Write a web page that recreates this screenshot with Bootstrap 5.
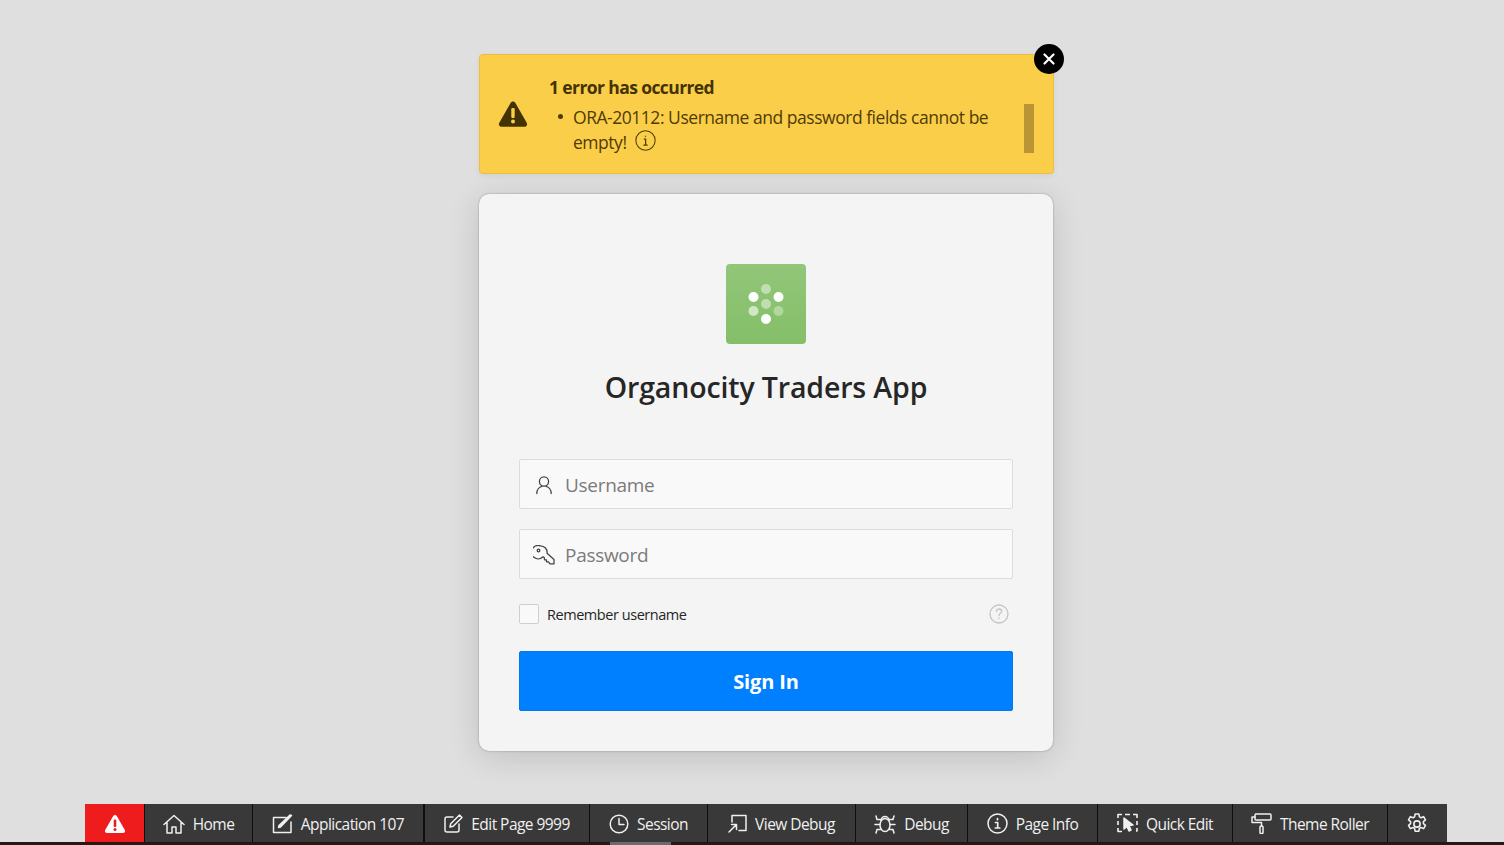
<!DOCTYPE html>
<html lang="en">
<head>
    <meta charset="UTF-8">
    <title>Organocity Traders App - Sign In</title>
    <meta name="viewport" content="width=device-width, initial-scale=1.0">
    <link href="https://cdn.jsdelivr.net/npm/bootstrap@5.3.0/dist/css/bootstrap.min.css" rel="stylesheet">
    <style>
        html, body { height: 100%; }
        body { background: #dfdfdf; font-family: "Open Sans", "Noto Sans", sans-serif; color: #262626; overflow: hidden; }
        .page-wrap { height: 845px; }
        .login-col { width: 575px; margin: 54px 0 0 479px; }

        .err-box { height: 120px; background: #fbce4a; border: 1px solid #eebd3c; border-radius: 4px; color: #443302; box-shadow: 0 2px 6px rgba(0,0,0,.06); padding-left: 18px; }
        .err-title { font-size: 17.5px; font-weight: 700; line-height: 24px; letter-spacing: -.6px; margin-bottom: 6px; margin-top: -1px; padding-left: 1px; }
        .err-list { font-size: 17.5px; line-height: 25px; letter-spacing: -.47px; padding-left: 25px; margin: 0; color: #4f3c05; list-style: none; }
        .err-list li { position: relative; }
        .err-list li::before { content: ""; position: absolute; left: -15px; top: 9px; width: 5px; height: 5px; border-radius: 50%; background: #4f3c05; }
        .err-text { width: 445px; margin-left: 20px; padding-top: 21px; }
        .err-scroll { width: 10px; height: 49px; background: #b99535; position: absolute; right: 19px; top: 49px; }
        .err-close { position: absolute; right: -11px; top: -11px; width: 30px; height: 30px; border-radius: 50%; background: #000; border: 0; padding: 0; }

        .login-card { margin-top: 20px; height: 557px; width: 574px; background: #f4f4f4; border-radius: 10px; box-shadow: 0 0 2px rgba(0,0,0,.35), 0 6px 32px rgba(0,0,0,.14); padding: 70px 40px 0; }
        .app-logo { width: 80px; height: 80px; border-radius: 4px; background: linear-gradient(#92c679, #84bf68); }
        .app-name { font-size: 28.5px; font-weight: 600; line-height: 36px; margin: 25px 0 54px; letter-spacing: -.14px; color: #262626; }
        .field-box { height: 50px; background: #f9f9f9; border: 1px solid #dcdcdc; border-radius: 2px; margin-bottom: 20px; }
        .field-icon { width: 45px; flex: none; padding: 2px 0 0 3px; }
        .field-box .form-control { background: transparent; border: 0; padding: 2px 0 0; font-size: 19px; letter-spacing: -.3px; box-shadow: none; }
        .field-box .form-control::placeholder { color: #7b7b7b; }
        .remember-row { height: 20px; margin: 25px 0 27px; }
        .remember-row .form-check-input { width: 20px; height: 20px; margin: 0; background-color: #f9f9f9; border-color: #cfcfcf; border-radius: 2px; }
        .remember-row label { font-size: 14.5px; margin-left: 8px; padding-top: 2px; letter-spacing: -.45px; }
        .signin-btn { height: 60px; width: 100%; background: #0080ff; border: 1px solid #0076f0; border-radius: 2px; color: #fff; font-size: 20px; font-weight: 700; letter-spacing: -.15px; padding-top: 8px; }
        .signin-btn:hover { background: #0080ff; color: #fff; }

        .dev-bar { margin: 0 57px 0 85px; height: 38px; background: #393939; }
        .dev-item { height: 38px; padding-top: 3px; color: #f0f0f0; font-size: 15.5px; letter-spacing: -.55px; border-right: 1px solid #0f0f0f; text-decoration: none; white-space: nowrap; gap: 8px; justify-content: center; position: relative; }
        .dev-item:hover { color: #fff; }
        .dev-item.alert-item { background: #ee1c1c; }
        .dev-item:last-child { border-right: 0; }
        .dev-item svg { flex: none; margin-top: -2px; fill: none; stroke: #f0f0f0; stroke-width: 1.5; stroke-linecap: round; stroke-linejoin: round; }
        .w-alert { width: 60px; }
        .w-home { width: 108px; }
        .w-app { width: 172px; border-right-width: 2px !important; }
        .w-edit { width: 165px; }
        .w-session { width: 118px; }
        .w-view { width: 148px; }
        .w-debug { width: 112px; }
        .w-info { width: 130px; }
        .w-quick { width: 135px; }
        .w-theme { width: 155px; }
        .w-gear { width: 59px; padding-right: 2px; }
        .bottom-strip { height: 3px; background: #2a1612; position: relative; }
        .strip-tab { position: absolute; left: 610px; top: 0; width: 61px; height: 3px; background: #6b6b6b; }
    </style>
</head>
<body>

<div class="page-wrap d-flex flex-column">
    <div class="login-col">
        <!-- Error message -->
        <div class="err-box d-flex position-relative">
            <svg class="align-self-center flex-shrink-0" width="30" height="28" viewBox="0 0 30 28">
                <path d="M15 1.500c1 0 1.800.5 2.400 1.500l11.300 19.800c1 1.900-.2 4-2.400 4H3.700c-2.200 0-3.400-2.100-2.400-4L12.600 3c.6-1 1.400-1.500 2.400-1.500z" fill="#443302"/>
                <rect x="13.300" y="8" width="3.400" height="10" rx="1.200" fill="#fbce4a"/>
                <circle cx="15" cy="21.500" r="2" fill="#fbce4a"/>
            </svg>
            <div class="err-text">
                <div class="err-title">1 error has occurred</div>
                <ul class="err-list">
                    <li>ORA-20112: Username and password fields cannot be empty!
                        <svg class="ms-1 align-text-top" width="21" height="21" viewBox="0 0 20 20" fill="none" stroke="#4f3c05">
                            <circle cx="10" cy="10" r="9.200" stroke-width="1"/>
                            <path d="M10 5.500v1M8.400 8.800h1.700v5.700M8 14.500h4" stroke-width="1.200"/>
                        </svg>
                    </li>
                </ul>
            </div>
            <div class="err-scroll"></div>
            <button class="err-close d-flex align-items-center justify-content-center" type="button" aria-label="Close">
                <svg width="12" height="12" viewBox="0 0 12 12"><path d="M1.500 1.500l9 9M10.500 1.500l-9 9" stroke="#fff" stroke-width="2.200" stroke-linecap="round"/></svg>
            </button>
        </div>

        <!-- Login card -->
        <div class="login-card">
            <div class="text-center">
                <svg class="app-logo" viewBox="0 0 80 80">
                    <circle cx="40" cy="25" r="5" fill="#fff" opacity=".45"/>
                    <circle cx="27.500" cy="33" r="5" fill="#fff"/>
                    <circle cx="52.500" cy="33" r="5" fill="#fff"/>
                    <circle cx="40" cy="40" r="5" fill="#fff" opacity=".45"/>
                    <circle cx="27.500" cy="47" r="5" fill="#fff" opacity=".6"/>
                    <circle cx="52.500" cy="47" r="5" fill="#fff" opacity=".35"/>
                    <circle cx="40" cy="55" r="5" fill="#fff"/>
                </svg>
                <h1 class="app-name">Organocity Traders App</h1>
            </div>
            <div class="field-box d-flex align-items-center">
                <span class="field-icon d-flex justify-content-center">
                    <svg width="20" height="20" viewBox="0 0 20 20" fill="none" stroke="#444" stroke-width="1.300"><circle cx="10" cy="6.500" r="4.600"/><path d="M2.800 18.500c0-4 2.600-6.600 5-7.200M17.200 18.500c0-4-2.600-6.600-5-7.200" stroke-linecap="round"/></svg>
                </span>
                <input class="form-control" type="text" placeholder="Username" aria-label="Username">
            </div>
            <div class="field-box d-flex align-items-center">
                <span class="field-icon d-flex justify-content-center">
                    <svg width="22" height="20" viewBox="0 0 22 20" fill="none" stroke="#444" stroke-width="1.300" stroke-linejoin="round"><path d="M7.500.8a6.700 6.700 0 0 1 6.600 7.400l6.900 6.300v4.300h-4l-1.500-2h-2v-2h-2l-.2-2.200-1.300-.8A6.700 6.700 0 1 1 7.500.8z"/><circle cx="5.500" cy="5.500" r="1.300"/></svg>
                </span>
                <input class="form-control" type="password" placeholder="Password" aria-label="Password">
            </div>
            <div class="remember-row d-flex align-items-center">
                <input class="form-check-input" type="checkbox" id="rememberMe">
                <label for="rememberMe">Remember username</label>
                <svg class="ms-auto me-1" width="20" height="20" viewBox="0 0 20 20" fill="none" stroke="#c4c4c4" stroke-width="1.300"><circle cx="10" cy="10" r="9"/><path d="M7.400 7.600c0-1.600 1.200-2.600 2.700-2.600s2.600 1 2.600 2.300c0 2-2.700 2.100-2.700 4.200M10 14v.6" stroke-linecap="round"/></svg>
            </div>
            <button class="btn signin-btn" type="button">Sign In</button>
        </div>
    </div>

    <!-- Developer toolbar -->
    <div class="dev-bar d-flex mt-auto">
        <a class="dev-item alert-item w-alert d-flex align-items-center" href="#" aria-label="Errors">
            <svg width="22" height="20" viewBox="0 0 22 20" style="stroke:none"><path d="M11 1c.8 0 1.300.4 1.800 1.100l8 14c.8 1.400-.2 2.900-1.800 2.900H3c-1.600 0-2.600-1.500-1.800-2.900l8-14C9.700 1.400 10.200 1 11 1z" fill="#fff"/><rect x="9.700" y="5.500" width="2.600" height="7.500" rx="1" fill="#ee1c1c"/><circle cx="11" cy="15.500" r="1.500" fill="#ee1c1c"/></svg>
        </a>
        <a class="dev-item w-home d-flex align-items-center" href="#">
            <svg width="22" height="20" viewBox="0 0 22 20"><path d="M1 10.500L11 1.500l10 9M4 8.500V19h5v-6h4v6h5V8.500"/></svg>Home
        </a>
        <a class="dev-item w-app d-flex align-items-center" href="#">
            <svg width="21" height="20" viewBox="0 0 21 20"><path d="M14 3.500H1.500V18.500H19V8"/><path d="M6.500 13.500l2-.5L19.500 1.500 18 1 7 11.500z" fill="#f0f0f0"/></svg>Application 107
        </a>
        <a class="dev-item w-edit d-flex align-items-center" href="#">
            <svg width="19" height="19" viewBox="0 0 19 19"><path d="M9 3H3a2 2 0 0 0-2 2v11a2 2 0 0 0 2 2h10a2 2 0 0 0 2-2v-6"/><path d="M6 13l.7-3.200L15.500 1l2.500 2.500-8.800 8.800z"/></svg>Edit Page 9999
        </a>
        <a class="dev-item w-session d-flex align-items-center" href="#">
            <svg width="20" height="20" viewBox="0 0 20 20"><circle cx="10" cy="10" r="8.800"/><path d="M10 4.500V10.500h5"/></svg>Session
        </a>
        <a class="dev-item w-view d-flex align-items-center" href="#">
            <svg width="19" height="19" viewBox="0 0 19 19"><path d="M4 8V1.500h14V16.500H11"/><path d="M1 18l7.500-7.500M3.500 10.500h5v5"/></svg>View Debug
        </a>
        <a class="dev-item w-debug d-flex align-items-center" href="#">
            <svg width="22" height="20" viewBox="0 0 22 20"><ellipse cx="11" cy="11" rx="5" ry="6.500"/><path d="M7 6.500a4 4 0 0 1 8 0M6 10.500H1M16 10.500h5M2 2l1 3.500h4M20 2l-1 3.500h-4M2 19l1-3.500h3.500M20 19l-1-3.500h-3.500"/></svg>Debug
        </a>
        <a class="dev-item w-info d-flex align-items-center" href="#">
            <svg width="21" height="21" viewBox="0 0 21 21"><circle cx="10.500" cy="10.500" r="9.500"/><path d="M10.500 5.500v1.200M8.500 9.500h2.200v5.500M8.300 15h4.500" stroke-width="1.700"/></svg>Page Info
        </a>
        <a class="dev-item w-quick d-flex align-items-center" href="#">
            <svg width="21" height="21" viewBox="0 0 21 21"><path d="M1 5V1.500h4M8 1.500h5M16 1.500h4V5M20 8v4M20 15v3h-1M1 8v4M1 15v3.500h4" stroke-width="1.600" stroke-linecap="butt"/><path d="M7 5l9 7-4 .5 2 4.500-2 1-2-4.500-3 2.500z" fill="#f0f0f0"/></svg>Quick Edit
        </a>
        <a class="dev-item w-theme d-flex align-items-center" href="#">
            <svg width="21" height="21" viewBox="0 0 21 21"><rect x="4" y="1" width="16" height="6" rx="1"/><path d="M4 4H1v5.500h9.500V13"/><rect x="9" y="13" width="3" height="7.500" rx="1"/></svg>Theme Roller
        </a>
        <a class="dev-item w-gear d-flex align-items-center" href="#" aria-label="Settings">
            <svg width="22" height="22" viewBox="0 0 21 21"><circle cx="10.500" cy="10.500" r="3"/><path d="M8.700 1h3.600l.5 2.700 1.500.8 2.500-1 1.800 3.100-2 1.700v1.800l2 1.700-1.800 3.100-2.500-1-1.500.8-.5 2.700H8.700l-.5-2.700-1.500-.8-2.500 1-1.800-3.100 2-1.700V8.300l-2-1.700 1.800-3.100 2.500 1 1.500-.8z"/></svg>
        </a>
    </div>
    <div class="bottom-strip"><span class="strip-tab"></span></div>
</div>

<script src="https://cdn.jsdelivr.net/npm/bootstrap@5.3.0/dist/js/bootstrap.bundle.min.js"></script>
</body>
</html>
